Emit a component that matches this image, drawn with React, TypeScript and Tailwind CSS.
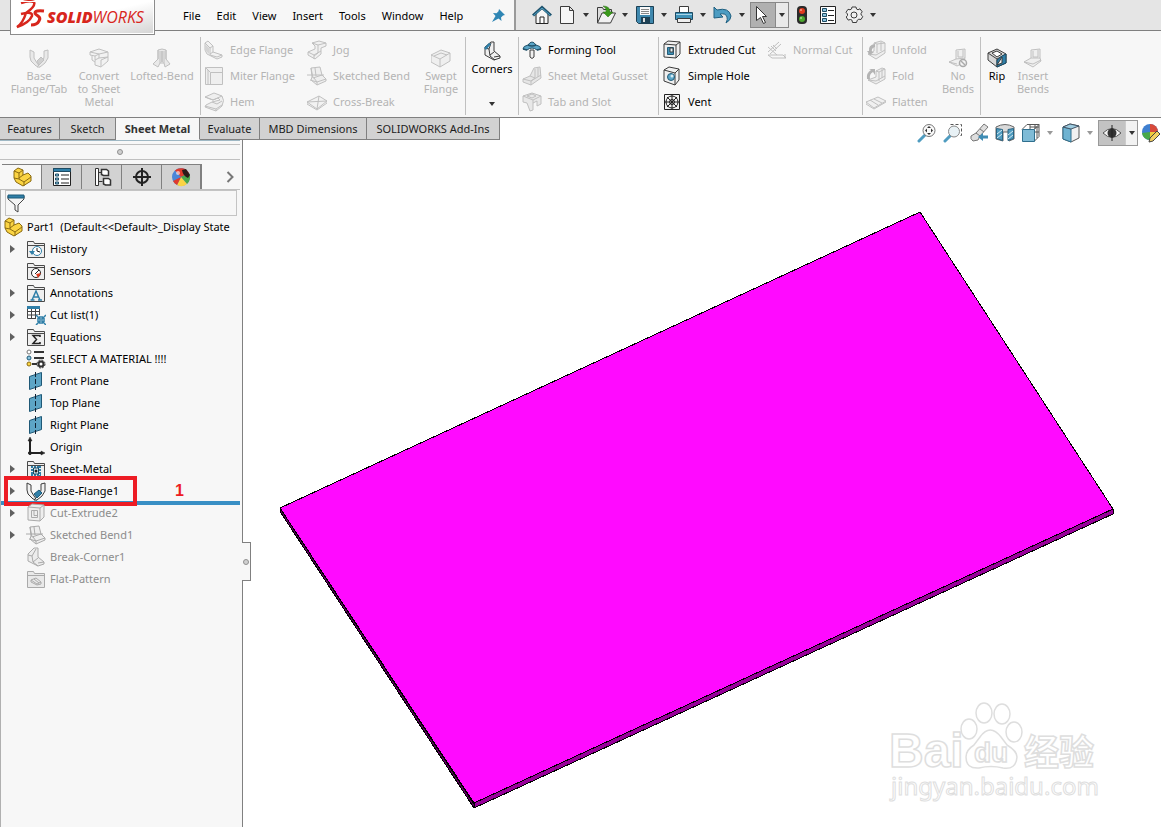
import React from "react";

const S = "#3c3c3c";
const B = "#2f7fa8";
const L = "#8cc4de";
const G = "#c0c0c0";
const F = "#e9e9e9";

const icons: Record<string, React.ReactNode> = {
  baseOff: (
    <g fill={F} stroke={G}>
      <path d="M1 2l4 2v6l3 5 3 4-4-1-5-5-1-4z" />
      <path d="M15 3l4-1v8l-3 5-5 4H8l6-6 1-4z" />
      <path d="M8 13l4-4 3 3-5 5z" fill="#cfcfcf" />
    </g>
  ),
  base: (
    <g fill="#f2f2f2" stroke={S}>
      <path d="M1 2l4 2v6l3 5 3 4-4-1-5-5-1-4z" />
      <path d="M15 3l4-1v8l-3 5-5 4H8l6-6 1-4z" />
      <path d="M8 13l5-4 3 3-5 5z" fill={B} stroke="#1d5a78" />
    </g>
  ),
  convert: (
    <g fill="#f2f2f2" stroke={G}>
      <path d="M1 4l9-3 9 3v9l-7 6-6-2V8L1 7z" />
      <path d="M1 4l9 2 9-2M10 6v4l9-1M10 10l-4 2M6 8l4-2M12 19v-7l7-3M3 8v4l3 2" />
    </g>
  ),
  loft: (
    <g fill={F} stroke={G}>
      <path d="M6 2q4-2 8 0v9l4 5-5 3-1-4H8l-2 4-5-3 5-5z" />
      <path d="M6 2v9M14 2v9M8 3v12M12 3v12" />
      <path d="M9 3h2v11H9z" fill="#c8c8c8" stroke="none" />
    </g>
  ),
  edge: (
    <g fill="#f2f2f2" stroke={G}>
      <path d="M1 3l3-2 5 5v6l9 3v2l-5 2-10-5-2-4z" />
      <path d="M1 3l5 5v7M6 8l3-2M6 14l3-2M6 15l7 2 5-2" />
      <path d="M1 4l4 4v6l-4-4z" fill="#d4d4d4" stroke="none" />
    </g>
  ),
  miter: (
    <g fill="#efefef" stroke={G}>
      <path d="M1.500 1.500h17v17h-17z" />
      <path d="M1.500 1.500l5 5h12M6.500 6.500v12M4 4v14" />
    </g>
  ),
  hem: (
    <g fill="#efefef" stroke={G}>
      <path d="M1 5l9-4 8 3q3 4 0 10l-6 5-11-4 1-2 6-3 8-2-2-2-5 2z" />
      <path d="M1 5l8 3 9-4M1 14l11 3 6-4M12 17v2M8 10l5 2 5-3" fill="none" />
    </g>
  ),
  jog: (
    <g fill="#f0f0f0" stroke={G}>
      <path d="M5 3l7-2 7 2v3l-5 2v6l-6 5-7-4v-3l7-3V6z" />
      <path d="M5 3l6 2v8l-4 3M11 5l8-2M1 12l6 3 7-4M7 15v4" fill="none" />
    </g>
  ),
  bend: (
    <g fill="#eee" stroke={G}>
      <path d="M4 2l9-1 2 8 4 4v2l-9 4-6-5 1-3z" />
      <path d="M4 2l2 10 9-3M7 12l3 4 9-3M10 16v3M0 9h17M8 2l1 8M3 14l7 2" fill="none" />
    </g>
  ),
  cross: (
    <g fill="#f2f2f2" stroke={G}>
      <path d="M0 10l12-6 8 5-10 8z" />
      <path d="M0 10l20-1M12 4l-2 13M0 10v2l10 6 10-7V9" fill="none" />
    </g>
  ),
  swept: (
    <g fill="#efefef" stroke={G}>
      <path d="M0 7l10-5 9 3v8l-10 6-9-5z" />
      <path d="M0 7l9 4 10-6M9 11v8M3 8l7-3 6 2" fill="none" />
    </g>
  ),
  corners: (
    <g fill="#f0f0f0" stroke={S}>
      <path d="M3 6l6-5h3v9l6 5v2l-6 2-9-5z" />
      <path d="M3 7l4 1 1 7 5 4M8 14l4-3M7 8l2-6M12 16l6-1" fill="none" />
      <path d="M2 7l5-5 2 1-5 6z" fill={B} stroke="none" />
    </g>
  ),
  forming: (
    <g stroke="#23536b">
      <path d="M1 9q0-3 5-4 4-6 8 0 5 1 5 4l-4 1q-5-4-10 0z" fill="#5ba6c8" />
      <path d="M6 5q4 2 8 0M1 9l4 1M15 10l4-1" fill="none" strokeWidth="1.500" />
      <path d="M8 10h4v7q-2 3-4 0z" fill="#f0f0f0" stroke={S} />
    </g>
  ),
  gusset: (
    <g fill="#e6e6e6" stroke={G}>
      <path d="M1 13l7-3 4-8 6-1 1 11-10 7-8-3z" />
      <path d="M1 13l8 2 10-6M9 15v4M8 10l5 2V3M13 12l-4 3M16 2v9" fill="none" />
    </g>
  ),
  tabslot: (
    <g fill="#e8e8e8" stroke={G}>
      <path d="M1 4l9-3 9 3v8l-4 2v-5l-4 2v7l-3 1-3-8-4-1z" />
      <path d="M1 4l10 4 8-4M11 8v3M5 4l5-2 4 2-4 2z" fill="none" />
    </g>
  ),
  cut: (
    <g fill="#f0f0f0" stroke={S}>
      <path d="M2 4l4-3 12 1v12l-4 4-12-1z" />
      <path d="M2 4l12 1 4-3M14 5v13" fill="none" />
      <path d="M5.500 7.500h6v7h-6z" fill="#3f92b8" stroke="#245c78" />
      <path d="M8 8h3v4H8z" fill="#e4f2f8" />
    </g>
  ),
  cutOff: (
    <g fill="#eee" stroke="#aaa">
      <path d="M2 4l4-3 12 1v12l-4 4-12-1z" />
      <path d="M2 4l12 1 4-3M14 5v13M5.500 7.500h6v7h-6zM8 7.500v5h3.500" fill="none" />
    </g>
  ),
  hole: (
    <g fill="#f0f0f0" stroke={S}>
      <path d="M2 4l5-3 10 2v11l-4 5-11-4z" />
      <path d="M2 4l11 3 4-4M13 7v12" fill="none" />
      <circle cx="9" cy="11" r="3.500" fill="#5ba6c8" stroke="#245c78" />
      <circle cx="10" cy="10" r="1.500" fill="#d7ebf4" stroke="none" />
    </g>
  ),
  vent: (
    <g fill="none" stroke="#222">
      <path d="M2.500 2.500h15v15h-15z" fill="#f4f4f4" />
      <circle cx="10" cy="10" r="6" />
      <circle cx="10" cy="10" r="2.500" />
      <path d="M10 3v14M3 10h14M5 5l10 10M15 5L5 15" />
    </g>
  ),
  normal: (
    <g fill="none" stroke={G}>
      <path d="M1 7l9 8M1 12L12 2M3 14L14 4M1 15h15l3 3H5zM4 6l5 5M6 5l4 4M18 14v4" />
    </g>
  ),
  unfold: (
    <g fill="#eee" stroke={G}>
      <path d="M8 3l7-2 4 2v10l-9 6-8-5 6-3z" />
      <path d="M8 3l3 1v9M11 4l8-1M2 14l8 1 9-5M15 2v9" fill="none" />
      <path d="M9 4q-7 1-6 7H1l3 4 4-3H6q-1-4 3-5z" fill="#b4b4b4" stroke="none" />
    </g>
  ),
  fold: (
    <g fill="#eee" stroke={G}>
      <path d="M10 5l6-3 3 1v10l-9 5-8-4 8-3z" />
      <path d="M10 5l3 1v9M13 6l6-3M2 14l8 1 9-5M16 3v9" fill="none" />
      <path d="M1 13q-1-6 4-9L3 3h6v6L7 6q-4 2-3 7z" fill="#b4b4b4" stroke="none" />
    </g>
  ),
  flatten: (
    <g fill="#f0f0f0" stroke={G}>
      <path d="M0 10l12-5 8 4-12 7z" />
      <path d="M4 8l8 5M8 7l8 4M0 10v2l8 5 12-7V9" fill="none" />
    </g>
  ),
  nobend: (
    <g fill="#efefef" stroke={G}>
      <path d="M8 2l9-1v9l-2 5-6 3-8-4 7-3z" />
      <path d="M8 11l9-1M1 14l8 2M10 3v6h5V2" fill="none" />
      <circle cx="15" cy="15" r="3.500" fill="#f4f4f4" stroke="#aaa" strokeWidth="1.500" />
      <path d="M13 13l4 4" stroke="#aaa" strokeWidth="1.500" />
    </g>
  ),
  rip: (
    <g fill="#d8d8d8" stroke={S}>
      <path d="M1 5l9-4 9 5v9l-9 4-9-7z" />
      <path d="M1 5l9 6 9-5M10 11v8" fill="none" />
      <path d="M5 5l5-2 5 3-5 3z" fill="#fff" />
      <path d="M10 12l5-4 4-2v9l-9 4z" fill={B} stroke="#1d4b63" />
      <path d="M10 17l5-8v6z" fill="#f4f4f4" />
    </g>
  ),
  insert: (
    <g fill="#efefef" stroke={G}>
      <path d="M8 2l9-1v9l1 3-8 6-9-5 7-4z" />
      <path d="M8 10h9M1 14l9 2 8-4M10 3v6h5V2" fill="none" />
    </g>
  ),
  home: (
    <g>
      <path d="M4 9v9.500h12V9l-6-6z" fill="#f6f6f6" stroke="#222" />
      <path d="M8 18v-6h4v6" fill="#fff" stroke="#222" />
      <path d="M1 10.500l9-8 9 8" fill="none" stroke="#1f526c" strokeWidth="3" />
      <path d="M1.500 10.500l8.500-7.500 8.500 7.500" fill="none" stroke="#4fa3c8" strokeWidth="1" />
    </g>
  ),
  page: <path d="M3.500 1.500h9l4 4v13h-13zM12.500 1.500v4h4" fill="#f6f6f6" stroke={S} />,
  open: (
    <g>
      <path d="M1.500 18V2.500h5l1 2h8V9" fill="#dcdcdc" stroke={S} />
      <path d="M1.500 18L6 8h13.500l-5 10z" fill="#f2f2f2" stroke={S} />
      <path d="M7 1q7 0 7 6h3l-5 5-5-5h3q1-4-3-6z" fill="#3a9a1a" stroke="#2a6f12" strokeWidth=".5" />
    </g>
  ),
  save: (
    <g>
      <path d="M1.500 1.500h17v17h-15l-2-2z" fill="#3f88ae" stroke="#1d4054" />
      <path d="M5 2h10v8H5z" fill="#fafafa" />
      <path d="M6 4.500h8M6 6.500h8M6 8.500h8" stroke="#888" />
      <path d="M6 12h9v6H6z" fill="#1d4054" />
      <path d="M8 13h2v4H8z" fill="#ddd" />
    </g>
  ),
  print: (
    <g>
      <path d="M5.500 8V1.500h9V8" fill="#fff" stroke={S} />
      <path d="M1.500 7.500h17v7h-17z" fill="#3f92b8" stroke="#1d4b63" />
      <path d="M2 9.500h16" stroke="#a9d5e8" />
      <path d="M3.500 13.500h13v4h-13z" fill="#eee" stroke={S} />
    </g>
  ),
  undo: <path d="M1 2l3 3q12-3 14 6 0 4-5 7 2-4 1-6-1-4-7-3l3 3-9 1z" fill="#4c9cc2" stroke="#1f5f80" />,
  pointer: <path d="M5.500 1.500v14l4-3 3 6 2-1-3-6h4z" fill="#fff" stroke="#333" />,
  traffic: (
    <g>
      <rect x="5" y="1" width="10" height="18" rx="4" fill="#2b2b2b" />
      <circle cx="10" cy="6" r="3" fill="#e03a1e" />
      <circle cx="10" cy="14" r="3" fill="#4ca82c" />
      <circle cx="9" cy="5" r="1" fill="#f6a08c" />
      <circle cx="9" cy="13" r="1" fill="#a8dc90" />
    </g>
  ),
  options: (
    <g>
      <path d="M2.500 1.500h15v17h-15z" fill="#fff" stroke="#222" />
      <path d="M4.500 3.500h4v3h-4zM4.500 8.500h4v3h-4zM4.500 13.500h4v3h-4z" fill={L} stroke="#1d4b63" />
      <path d="M10 5.500h6M10 10.500h6M10 15.500h6" stroke="#222" />
    </g>
  ),
  gear: (
    <g fill="#efefef" stroke={S}>
      <path d="M8 2h4l.5 2 1.500.8 2-1 2.200 3-1.200 1.700.2 1.500 1.600 1.500-1.800 3-2.200-.3-1.500 1-.8 2.300H8.500L8 15.200l-1.500-.7-2.300.6L2.200 12l1.300-1.500V9L2 7.300l2-3 2 .5L7.500 4z" />
      <circle cx="10" cy="10" r="3" />
    </g>
  ),
  zoomfit: (
    <g>
      <path d="M2 18l6-6" stroke="#4f9cc0" strokeWidth="3" strokeLinecap="round" />
      <circle cx="12" cy="7.500" r="6" fill="#fafafa" stroke="#777" />
      <path d="M12 3l2 2h-4zM12 12l2-2h-4zM8 7.500l2-2v4zM16 7.500l-2-2v4z" fill="#333" />
    </g>
  ),
  zoomarea: (
    <g>
      <path d="M7.500 1.500h11v11h-3" fill="none" stroke="#555" strokeDasharray="3 2" />
      <path d="M2 18l5-5" stroke="#4f9cc0" strokeWidth="3" strokeLinecap="round" />
      <circle cx="11" cy="8.500" r="5.500" fill="#e8f1f5" stroke="#888" />
    </g>
  ),
  prevview: (
    <g>
      <path d="M2 13l5-3 8-9 4 3-8 9-2 4-5 1q-3-2-2-5z" fill="#dedede" stroke="#777" />
      <path d="M7 10l4 3M11 6l4 3" stroke="#777" />
      <path d="M9 14l5-4v2.500h5v3h-5V18z" fill="#3f8cb4" />
    </g>
  ),
  section: (
    <g>
      <path d="M1 4q9-5 18 0v12l-5 2V9H8v9l-7-2z" fill="#dadada" stroke="#666" />
      <path d="M1.500 5.500l6 1v11l-6-2zM13 6.500l5.500-1v10l-5.500 2z" fill="#4f9cc0" stroke="#2b6482" />
      <path d="M2 11l5-4M2 15l5-4M13 12l5-4M13 16l5-4" stroke="#d7ebf4" />
    </g>
  ),
  orient: (
    <g fill="none" stroke="#555">
      <path d="M6 1.500h12v12l-5 5M6 1.500l-5 5M18 1.500l-5 5M9 2v4M14 2v4M9 4h9M13 9h5M16 4v11" />
      <path d="M1.500 6.500h12v12h-12z" fill="#7fbbd6" stroke="#2f6f8e" />
    </g>
  ),
  display: (
    <g>
      <path d="M2 4l7-3 9 2v12l-8 4-8-3z" fill="#f1f1f1" stroke="#555" />
      <path d="M2 4l8 2v13l-8-3z" fill="#6fb3d1" stroke="#2f6f8e" />
      <path d="M2 4l7-3 9 2-8 3z" fill="#9fcde1" stroke="#456" />
    </g>
  ),
  eye: (
    <g>
      <path d="M1 10q9-9 18 0-9 9-18 0z" fill="#f3f3f3" stroke="#555" />
      <circle cx="10" cy="10" r="4.500" fill="#333" />
      <path d="M10 2v16" stroke="#222" />
    </g>
  ),
  appearance: (
    <g>
      <circle cx="9" cy="9" r="8" fill="#3f7fd0" />
      <path d="M9 9V1a8 8 0 0 1 8 8z" fill="#d84a3a" />
      <path d="M9 9h8a8 8 0 0 1-8 8z" fill="#f0c93a" />
      <path d="M9 9v8a8 8 0 0 1-8-7z" fill="#48a848" />
      <path d="M8 19l1-4 7-7 3 3-7 7z" fill="#f4d160" stroke="#444" />
    </g>
  ),
  part: (
    <g fill="#fbd443" stroke="#8a6a10">
      <path d="M2 4l4-3 5 2v5l5-2 3 3v5l-8 5-7-4-2-4z" />
      <path d="M2 4l5 2v6l5 3 7-5M7 6l4-3M12 15v4M11 8l-4 3M2 11l5 1" fill="none" />
    </g>
  ),
  sheet: (
    <g>
      <path d="M1.500 1.500h17v17h-17z" fill="#fff" stroke="#222" />
      <path d="M1.500 1.500h17v3h-17z" fill={B} stroke="#1d4b63" />
      <path d="M3.500 7h3v2h-3zM3.500 11h3v2h-3zM3.500 15h3v2h-3z" fill={L} stroke="#1d4b63" />
      <path d="M9 8h8M9 12h8M9 16h8" stroke="#222" />
    </g>
  ),
  config: (
    <g fill="#fff" stroke="#333">
      <path d="M3.500 1.500h3v17h-3z" />
      <path d="M6.500 5.500h4M6.500 14.500h4" />
      <path d="M9.500 2.500h5l2 1.500v4.500h-5l-2-1zM11.500 11.500h5l2 1.500v5h-5l-2-1z" strokeWidth="1.500" />
    </g>
  ),
  target: (
    <g fill="none" stroke="#222" strokeWidth="2">
      <circle cx="10" cy="10" r="6" />
      <path d="M10 1v18M1 10h18" />
    </g>
  ),
  ball: (
    <g>
      <circle cx="10" cy="10" r="9" fill="#4a86d8" />
      <path d="M10 10L4 3.500A9 9 0 0 1 18 6z" fill="#e03a2c" />
      <path d="M10 10L18 6a9 9 0 0 1-2 11z" fill="#4aa84a" />
      <path d="M10 10l6 7a9 9 0 0 1-10 1z" fill="#fbd443" />
      <path d="M10 10L6 18a9 9 0 0 1-4-4z" fill="#e03a2c" />
      <path d="M11 3l4-1 4 6-2 3q-5-2-6-8z" fill="#2a1a1a" />
      <circle cx="7" cy="6" r="2" fill="#fff" fillOpacity=".6" />
    </g>
  ),
  filter: (
    <g>
      <path d="M2 3h16v3l-6 6v7l-3-2v-5L2 6z" fill="#f4f4f4" stroke="#444" />
      <path d="M2 2h16v3H2z" fill={B} stroke="#1d5a78" />
    </g>
  ),
};

const folder = (
  <path d="M1.500 18.500v-16h6l1 2h10v14zM1.500 6.500h17" fill="#efefef" stroke="#4a4a4a" />
);

const treeIcons: Record<string, React.ReactNode> = {
  history: (
    <g>
      {folder}
      <circle cx="11" cy="12" r="4.500" fill="#fff" stroke={B} />
      <path d="M11 9v3l3 1" fill="none" stroke="#222" />
      <path d="M3 12h6l-3 4z" fill={B} />
    </g>
  ),
  sensors: (
    <g>
      {folder}
      <circle cx="10" cy="12" r="4.500" fill="#fff" stroke="#222" />
      <path d="M10 13l5-1-3 5z" fill="#e03a1e" />
      <path d="M9 13l4-4" stroke="#222" />
    </g>
  ),
  annotations: (
    <g>
      {folder}
      <path d="M6 17l4-9 4 9M7 14h6M4.500 17h4M12 17h4" fill="none" stroke={B} strokeWidth="1.500" />
    </g>
  ),
  cutlist: (
    <g>
      <path d="M1.500 2.500h12v11h-12zM1.500 6.500h12M1.500 10h12M5.500 4v10M9.500 4v10" fill="#fff" stroke="#444" />
      <path d="M1 1h13v3H1z" fill={B} />
      <path d="M10 10h10v10H10z" fill="#f7f7f7" />
      <path d="M10 10l4 4v-3M14 14h-3M20 10l-4 4v-3M16 14h3M10 20l4-4v3M14 16h-3M20 20l-4-4v3M16 16h3" fill="none" stroke={B} strokeWidth="1.500" />
    </g>
  ),
  equations: (
    <g>
      {folder}
      <path d="M14 10V8.500H7l3.500 4L7 16.500h7V15" fill="none" stroke="#222" strokeWidth="1.500" />
    </g>
  ),
  material: (
    <g>
      <path d="M8 3h10M8 9h10M6 15h5" stroke="#333" strokeWidth="2" />
      <circle cx="3" cy="3" r="2" fill="#fff" stroke="#777" />
      <circle cx="3" cy="9" r="2" fill={L} stroke="#1d5a78" />
      <circle cx="3" cy="15" r="2" fill="#fbd443" stroke="#8a6a10" />
      <circle cx="15" cy="15" r="2.500" fill="#fff" stroke="#333" strokeWidth="2" />
      <circle cx="15" cy="15" r="4" fill="none" stroke="#333" strokeDasharray="2 1.140" />
    </g>
  ),
  plane: (
    <g>
      <path d="M3.500 5.500l12-4v13l-12 4z" fill="#5da5c6" stroke="#1f5876" />
      <path d="M9.500 1v18" stroke="#123" strokeDasharray="5 2" />
    </g>
  ),
  origin: (
    <g stroke="#222" fill="#222">
      <path d="M4 3v13h12" fill="none" strokeWidth="2" />
      <path d="M4 0l2 4H2zM19 16l-4-2v4z" strokeWidth=".5" />
      <circle cx="4" cy="16" r="1.500" />
    </g>
  ),
  sheetmetal: (
    <g>
      {folder}
      <path d="M5 8h10M5 16h10M6 7v10M14 7v10" stroke={B} strokeWidth="2" strokeDasharray="2 1" />
      <path d="M7.500 9h5v6h-5z" fill="#d7ebf4" stroke="#1d4b63" />
      <circle cx="10" cy="12" r="1.500" fill="#222" />
    </g>
  ),
  base: icons.base,
  cut: icons.cutOff,
  bend: (
    <g fill="#eee" stroke="#aaa">
      <path d="M4 2l9-1 2 8 4 4v2l-9 4-6-5 1-3z" />
      <path d="M4 2l2 10 9-3M7 12l3 4 9-3M10 16v3M0 9h17M8 2l1 8M3 14l7 2" fill="none" />
    </g>
  ),
  corner: (
    <g fill="#ececec" stroke="#aaa">
      <path d="M2 7l6-6h4v9l6 5v2l-6 2-10-5z" />
      <path d="M2 8l4 1 1 6 5 4M7 15l5-4M6 9l4-7M12 16l6-1" fill="none" />
    </g>
  ),
  flat: (
    <g stroke="#aaa" fill="#e9e9e9">
      <path d="M1.500 18.500v-16h6l1 2h10v14zM1.500 6.500h17" />
      <path d="M5 11l5-2 5 4v2l-4 1-6-3zM5 11l6 4 4-2M8 10l5 4" />
    </g>
  ),
};

function Icon({ name, tree = false }: { name: string; tree?: boolean }) {
  return (
    <svg viewBox="0 0 20 20" className="h-5 w-5 shrink-0" aria-hidden="true">
      {tree ? treeIcons[name] : icons[name]}
    </svg>
  );
}

function Caret({ light = false }: { light?: boolean }) {
  return (
    <svg viewBox="0 0 6 4" className="h-1 w-1.5 shrink-0" aria-hidden="true">
      <path d="M0 0h6L3 4z" fill={light ? "#999" : "#333"} />
    </svg>
  );
}

type Cmd = [icon: string, label: string, on?: boolean];

function Rows({ items, width }: { items: Cmd[]; width: string }) {
  return (
    <div className={`flex shrink-0 flex-col ${width}`}>
      {items.map(([icon, label, on]) => (
        <button
          key={label}
          className={`flex h-[26px] items-center gap-1.5 text-left whitespace-nowrap ${on ? "text-black" : "text-[#b4b4b4]"}`}
        >
          <Icon name={icon} />
          {label}
        </button>
      ))}
    </div>
  );
}

function Big({ icon, label, width, on = false }: { icon: string; label: string; width: string; on?: boolean }) {
  return (
    <button
      className={`flex h-[78px] shrink-0 flex-col items-center gap-px pt-[11px] leading-[13px] whitespace-pre-line ${width} ${on ? "text-black" : "text-[#b4b4b4]"}`}
    >
      <Icon name={icon} />
      <span>{label}</span>
    </button>
  );
}

function Group({ children, width }: { children: React.ReactNode; width: string }) {
  return <div className={`flex h-[78px] shrink-0 border-r border-[#c0c0c0] ${width}`}>{children}</div>;
}

function Logo() {
  return (
    <div className="relative z-10 flex h-[35px] w-[145px] shrink-0 items-center gap-0.5 border border-t-0 border-[#8c8c8c] bg-linear-to-br from-white from-50% to-[#d4d4d4] pl-1 text-[#d8261c] outline-1 -outline-offset-2 outline-white">
      <svg viewBox="0 0 30 30" className="mb-1 h-[30px] w-[30px] shrink-0" fill="none" stroke="#d8261c" aria-hidden="true">
        <path d="M6 3q8-3 13-1 2 4-8 11" strokeWidth="2.500" />
        <path d="M6 14q12-3 11 2-3 7-15 11 6-4 9-14" strokeWidth="2.500" />
        <path d="M29 11q-9-1-9 2 0 1 3 3 3 2 1 5-2 4-8 4" strokeWidth="3" />
      </svg>
      <span className="font-['Open_Sans'] text-base leading-5 whitespace-nowrap italic">
        <b className="font-extrabold">SOLID</b>WORKS
      </span>
    </div>
  );
}

const menus = ["File", "Edit", "View", "Insert", "Tools", "Window", "Help"];

function TitleBar() {
  return (
    <header className="flex h-[31px] items-start border-b border-[#808080] bg-[#e5e5e5] pl-2.5">
      <Logo />
      <nav className="flex h-[30px] w-[361px] shrink-0 items-center gap-4 border-r-2 border-[#9a9a9a] bg-[#f7f7f7] pt-0.5 pl-7">
        {menus.map((m) => (
          <button key={m}>{m}</button>
        ))}
        <svg viewBox="0 0 14 14" className="ml-3 h-3.5 w-3.5" aria-label="Pin menu">
          <path d="M8 0l6 6-2 .5-2 2 .5 3.500-3-2.500L1 13l3.500-6L2 4l3.500.3 2-2z" fill="#2f86b4" />
        </svg>
      </nav>
      <div className="flex h-[30px] shrink-0 items-center pl-4">
        <button aria-label="Home" className="w-[25px]">
          <Icon name="home" />
        </button>
        {["page", "open", "save", "print", "undo"].map((n) => (
          <button key={n} aria-label={n} className="flex w-[39px] items-center gap-1.5">
            <Icon name={n} />
            <Caret />
          </button>
        ))}
        <button aria-label="Select" className="-ml-0.5 flex h-[26px] w-[39px] items-center border border-[#888] bg-[#eaeaea]">
          <span className="flex h-full w-[25px] items-center border-r border-[#888] bg-[#b0b0b0]">
            <Icon name="pointer" />
          </span>
          <span className="pl-[3px]">
            <Caret />
          </span>
        </button>
        <div className="flex items-center gap-1.5 pl-[3px]">
          <button aria-label="Rebuild">
            <Icon name="traffic" />
          </button>
          <button aria-label="File properties">
            <Icon name="options" />
          </button>
          <button aria-label="Options" className="flex items-center gap-1.5">
            <Icon name="gear" />
            <Caret />
          </button>
        </div>
      </div>
    </header>
  );
}

function Ribbon() {
  return (
    <section className="flex h-[87px] border-b border-[#808080] bg-[#f7f7f7] pt-1.5">
      <Group width="w-[201px] pl-2">
        <Big icon="baseOff" label={"Base\nFlange/Tab"} width="w-[62px]" />
        <Big icon="convert" label={"Convert\nto Sheet\nMetal"} width="w-[58px]" />
        <Big icon="loft" label="Lofted-Bend" width="w-[68px]" />
      </Group>
      <Group width="w-[265px] pl-[3px]">
        <Rows width="w-[103px]" items={[["edge", "Edge Flange"], ["miter", "Miter Flange"], ["hem", "Hem"]]} />
        <Rows width="w-[110px]" items={[["jog", "Jog"], ["bend", "Sketched Bend"], ["cross", "Cross-Break"]]} />
        <Big icon="swept" label={"Swept\nFlange"} width="w-[48px]" />
      </Group>
      <Group width="w-[53px]">
        <button className="flex w-full flex-col items-center gap-px pt-1 leading-[13px]">
          <Icon name="corners" />
          <span>Corners</span>
          <span className="pt-[26px] leading-none">
            <Caret />
          </span>
        </button>
      </Group>
      <Group width="w-[140px] pl-[3px]">
        <Rows
          width="w-[130px]"
          items={[["forming", "Forming Tool", true], ["gusset", "Sheet Metal Gusset"], ["tabslot", "Tab and Slot"]]}
        />
      </Group>
      <Group width="w-[204px] pl-[3px]">
        <Rows
          width="w-[105px]"
          items={[["cut", "Extruded Cut", true], ["hole", "Simple Hole", true], ["vent", "Vent", true]]}
        />
        <Rows width="w-[90px]" items={[["normal", "Normal Cut"]]} />
      </Group>
      <Group width="w-[118px] pl-[3px]">
        <Rows width="w-[72px]" items={[["unfold", "Unfold"], ["fold", "Fold"], ["flatten", "Flatten"]]} />
        <Big icon="nobend" label={"No\nBends"} width="w-[40px]" />
      </Group>
      <div className="flex">
        <Big icon="rip" label="Rip" width="w-[32px]" on />
        <Big icon="insert" label={"Insert\nBends"} width="w-[40px]" />
      </div>
    </section>
  );
}

const ribbonTabs: [string, string][] = [
  ["Features", "w-[60px]"],
  ["Sketch", "w-[56px]"],
  ["Sheet Metal", "w-[84px]"],
  ["Evaluate", "w-[60px]"],
  ["MBD Dimensions", "w-[107px]"],
  ["SOLIDWORKS Add-Ins", "w-[133px]"],
];

function RibbonTabs() {
  return (
    <div className="flex h-[22px] bg-white" role="tablist">
      {ribbonTabs.map(([t, w]) => (
        <button
          key={t}
          role="tab"
          aria-selected={t === "Sheet Metal"}
          className={`${w} shrink-0 border-r border-b border-[#808080] whitespace-nowrap ${t === "Sheet Metal" ? "border-b-[#f7f7f7] bg-[#f7f7f7] font-bold text-[#333]" : "bg-[#d2d2d2] text-[#1c1c1c]"}`}
        >
          {t}
        </button>
      ))}
    </div>
  );
}

type Node = { icon: string; label: string; arrow?: boolean; off?: boolean };
const nodes: Node[] = [
  { icon: "history", label: "History", arrow: true },
  { icon: "sensors", label: "Sensors" },
  { icon: "annotations", label: "Annotations", arrow: true },
  { icon: "cutlist", label: "Cut list(1)", arrow: true },
  { icon: "equations", label: "Equations", arrow: true },
  { icon: "material", label: "SELECT A MATERIAL !!!!" },
  { icon: "plane", label: "Front Plane" },
  { icon: "plane", label: "Top Plane" },
  { icon: "plane", label: "Right Plane" },
  { icon: "origin", label: "Origin" },
  { icon: "sheetmetal", label: "Sheet-Metal", arrow: true },
  { icon: "base", label: "Base-Flange1", arrow: true },
  { icon: "cut", label: "Cut-Extrude2", arrow: true, off: true },
  { icon: "bend", label: "Sketched Bend1", arrow: true, off: true },
  { icon: "corner", label: "Break-Corner1", off: true },
  { icon: "flat", label: "Flat-Pattern", off: true },
];

function FeatureTree() {
  return (
    <ul>
      <li className="flex h-[22px] items-center gap-1 overflow-hidden pl-0.5 whitespace-pre">
        <Icon name="part" />
        {"Part1  (Default<<Default>_Display State"}
      </li>
      {nodes.map((n) => (
        <li
          key={n.label}
          className={`relative flex h-[22px] items-center gap-1 whitespace-nowrap ${n.off ? "text-[#8c8c8c]" : "text-black"}`}
        >
          <span className="flex w-[21px] justify-start pl-[9px]">
            {n.arrow && (
              <svg viewBox="0 0 5 8" className="h-2 w-[5px]" aria-hidden="true">
                <path d="M0 0l5 4-5 4z" fill="#606060" />
              </svg>
            )}
          </span>
          <Icon name={n.icon} tree />
          {n.label}
          {n.label === "Base-Flange1" && (
            <>
              <span className="absolute right-0.5 -bottom-[3px] left-0 h-1 bg-[#398fc5]" />
              <span className="absolute -top-1 -bottom-1 left-[3px] w-[133px] border-4 border-[#ed1c24]" />
              <b className="absolute left-[174px] font-['Liberation_Sans',sans-serif] text-base text-[#ed1c24]">1</b>
            </>
          )}
        </li>
      ))}
    </ul>
  );
}

function SidePanel() {
  return (
    <aside className="relative z-10 flex w-[243px] shrink-0 flex-col border-r border-[#808080] bg-[#f7f7f7]">
      <div className="mr-0.5 h-[5px] border-t border-b border-t-[#9fb8c4] border-b-[#c0c0c0]" />
      <div className="mr-0.5 flex h-[15px] items-center justify-center border-b border-[#c0c0c0]">
        <span className="h-1.5 w-1.5 rounded-full border border-[#909090] bg-[#d0d0d0]" />
      </div>
      <div className="mr-0.5 flex h-[30px] items-stretch border-b border-[#c0c0c0] pt-1 pl-0.5">
        <button aria-label="FeatureManager" className="flex w-[39px] items-center justify-center border-t border-[#808080]">
          <Icon name="part" />
        </button>
        {["sheet", "config", "target", "ball"].map((n) => (
          <button
            key={n}
            aria-label={n}
            className="flex w-10 items-center justify-center border-t border-l border-[#808080] bg-[#d2d2d2] last-of-type:border-r"
          >
            <Icon name={n} />
          </button>
        ))}
        <div className="flex flex-1 items-center justify-end border-l border-l-[#808080] pr-1.5">
          <button aria-label="More tabs">
            <svg viewBox="0 0 8 12" className="h-3 w-2">
              <path d="M1.500 1l5 5-5 5" fill="none" stroke="#777" strokeWidth="2" />
            </svg>
          </button>
        </div>
      </div>
      <div className="flex-1 border-l border-[#b0b0b0]">
        <label className="mr-[5px] ml-1 flex h-[26px] items-center border border-[#c4c4c4]">
          <Icon name="filter" />
          <input aria-label="Filter" className="min-w-0 flex-1 bg-transparent outline-none" />
        </label>
        <FeatureTree />
      </div>
      <button
        aria-label="Collapse panel"
        className="absolute top-[402px] -right-[9px] flex h-[39px] w-[9px] items-center justify-center border border-l-0 border-[#808080] bg-[#f7f7f7]"
      >
        <span className="h-1.5 w-1.5 shrink-0 rounded-full border border-[#909090] bg-[#d0d0d0]" />
      </button>
    </aside>
  );
}

function ViewToolbar() {
  return (
    <div className="absolute -top-5 right-0 flex h-[26px] items-center">
      <div className="mr-[3px] flex gap-1.5">
        {["zoomfit", "zoomarea", "prevview", "section"].map((n) => (
          <button key={n} aria-label={n}>
            <Icon name={n} />
          </button>
        ))}
        {["orient", "display"].map((n) => (
          <button key={n} aria-label={n} className="flex w-[34px] items-center gap-1.5">
            <Icon name={n} />
            <Caret light />
          </button>
        ))}
      </div>
      <button aria-label="Hide or show items" className="flex h-[26px] w-10 items-center border border-[#999] bg-[#f2f2f2]">
        <span className="flex h-full w-[27px] items-center justify-center border-r border-[#ccc] bg-[#c3c3c3]">
          <Icon name="eye" />
        </span>
        <span className="pl-[3px]">
          <Caret />
        </span>
      </button>
      <button aria-label="Edit appearance" className="pl-[3px]">
        <Icon name="appearance" />
      </button>
    </div>
  );
}

function Watermark() {
  return (
    <g fill="#fff" stroke="#dedede" strokeWidth="1.500" fontFamily="'Liberation Sans', 'Noto Sans CJK SC', sans-serif">
      <text x="889" y="767" fontSize="48" fontWeight="700">
        Bai
      </text>
      <ellipse cx="969" cy="729" rx="8" ry="10" />
      <ellipse cx="984" cy="713" rx="8" ry="10" />
      <ellipse cx="1002" cy="714" rx="8" ry="10" />
      <ellipse cx="1014" cy="732" rx="8" ry="10" />
      <path d="M966 757q0-7 8-12l6-8q10-14 21 0l6 8q10 6 10 12-1 13-14 11-12-3-24 0-13 1-13-11z" />
      <text x="974" y="762" fontSize="28" fontWeight="700">
        du
      </text>
      <text x="1024" y="765" fontSize="35" fontWeight="700">
        经验
      </text>
      <text x="891" y="795" fontSize="24" fontFamily="'Noto Sans', sans-serif" strokeWidth="1">
        jingyan.baidu.com
      </text>
    </g>
  );
}

function Viewport() {
  return (
    <main className="relative min-w-0 flex-1 bg-white">
      <ViewToolbar />
      <svg viewBox="243 140 918 687" className="block h-full w-full" role="img" aria-label="Sheet metal plate">
        <g stroke="#000" strokeWidth="1" strokeLinejoin="round" shapeRendering="crispEdges">
          <path d="M280 508L474 804v4L281 513z" fill="#5c005c" />
          <path d="M474 803L1113 509v5L474 808z" fill="#98009a" />
          <path d="M280 508L920 212 1113 509 474 803z" fill="#ff0aff" />
        </g>
        <Watermark />
      </svg>
    </main>
  );
}

export default function App() {
  return (
    <div className="flex min-h-screen flex-col overflow-hidden bg-white font-['Noto_Sans','Open_Sans',sans-serif] text-[11px] leading-4 text-black">
      <TitleBar />
      <Ribbon />
      <RibbonTabs />
      <div className="flex flex-1">
        <SidePanel />
        <Viewport />
      </div>
    </div>
  );
}
